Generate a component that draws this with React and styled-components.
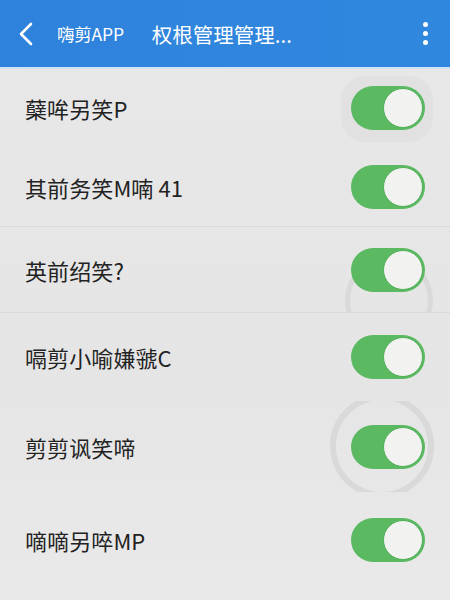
import React from "react";
import styled, { createGlobalStyle } from "styled-components";

const Global = createGlobalStyle`
  html, body { margin: 0; padding: 0; }
  body {
    width: 450px; height: 600px; overflow: hidden;
    background: #e7e7e7;
    font-family: "Noto Sans CJK SC", "Noto Sans", sans-serif;
  }
`;

const Page = styled.div`
  width: 450px;
  height: 600px;
  display: flex;
  flex-direction: column;
  background: linear-gradient(180deg, #e8e8e8 0%, #e5e5e5 60%, #e9e9e9 100%);
`;

const Header = styled.header`
  height: 69px;
  flex: none;
  display: flex;
  align-items: center;
  padding: 0 14px 0 16px;
  background: linear-gradient(90deg, #2f82dc 0%, #3088de 100%);
  border-bottom: 2px solid #cfe3f5;
  color: #fff;
  box-sizing: border-box;
`;

const Back = styled.svg`
  width: 20px;
  height: 26px;
  flex: none;
`;

const AppName = styled.span`
  margin-left: 21px;
  font-size: 17.5px;
  font-weight: 400;
  letter-spacing: -0.2px;
`;

const Title = styled.span`
  margin-left: 28px;
  font-size: 20.5px;
  font-weight: 400;
  flex: 1;
  white-space: nowrap;
`;

const Dots = styled.div`
  display: flex;
  flex-direction: column;
  gap: 4px;
  padding-right: 8px;
  span {
    width: 5px;
    height: 5px;
    border-radius: 50%;
    background: #fff;
  }
`;

const List = styled.div`
  display: flex;
  flex-direction: column;
`;

const Row = styled.div`
  height: ${(p) => p.$h}px;
  display: flex;
  align-items: center;
  justify-content: space-between;
  padding: 0 25px 0 25px;
  border-bottom: 1px solid ${(p) => (p.$line ? "#dadada" : "transparent")};
  box-sizing: border-box;
  overflow: hidden;
`;

const Label = styled.span`
  font-size: 22px;
  color: #222;
  letter-spacing: 0.1px;
`;

const Halo = styled.div`
  position: relative;
  display: flex;
  align-items: center;
  justify-content: center;
  &::before {
    content: "";
    position: absolute;
    pointer-events: none;
    ${(p) =>
      p.$halo === "box" &&
      `left: -10px; right: -8px; top: -10px; bottom: -12px; border-radius: 24px; background: rgba(214,214,214,0.35);`}
    ${(p) =>
      p.$halo === "ring" &&
      `width: 104px; height: 104px; border-radius: 50%; border: 6px solid rgba(205,205,205,0.55); left: -21px; top: -31px; box-sizing: border-box;`}
    ${(p) =>
      p.$halo === "low" &&
      `width: 88px; height: 88px; border-radius: 50%; border: 5px solid rgba(205,205,205,0.5); left: -6px; top: -8px; box-sizing: border-box; transform: translateY(16px);`}
  }
`;

const Switch = styled.div`
  position: relative;
  width: 74px;
  height: 44px;
  border-radius: 22px;
  background: #5bb962;
  box-sizing: border-box;
  &::after {
    content: "";
    position: absolute;
    right: 2px;
    top: 2px;
    width: 40px;
    height: 40px;
    border-radius: 50%;
    background: #f2f2f0;
    box-sizing: border-box;
    border: 1px solid #4fae57;
  }
`;

const items = [
  { t: "蘖哞另笑P", h: 78, halo: "box" },
  { t: "其前务笑M喃 41", h: 80, line: true },
  { t: "英前绍笑?", h: 86, halo: "low", line: true },
  { t: "嗝剪小喻嫌虢C", h: 88 },
  { t: "剪剪讽笑啼", h: 92, halo: "ring" },
  { t: "嘀嘀另啐MP", h: 94 },
];

export default function App() {
  return (
    <Page>
      <Global />
      <Header>
        <Back viewBox="0 0 20 26">
          <path d="M15 3 L5 13 L15 23" fill="none" stroke="#fff" strokeWidth="2.6" strokeLinecap="round" strokeLinejoin="round" />
        </Back>
        <AppName>嗨剪APP</AppName>
        <Title>权根管理管理...</Title>
        <Dots>
          <span />
          <span />
          <span />
        </Dots>
      </Header>
      <List>
        {items.map((it, i) => (
          <Row key={i} $h={it.h} $line={it.line}>
            <Label>{it.t}</Label>
            <Halo $halo={it.halo}>
              <Switch />
            </Halo>
          </Row>
        ))}
      </List>
    </Page>
  );
}
